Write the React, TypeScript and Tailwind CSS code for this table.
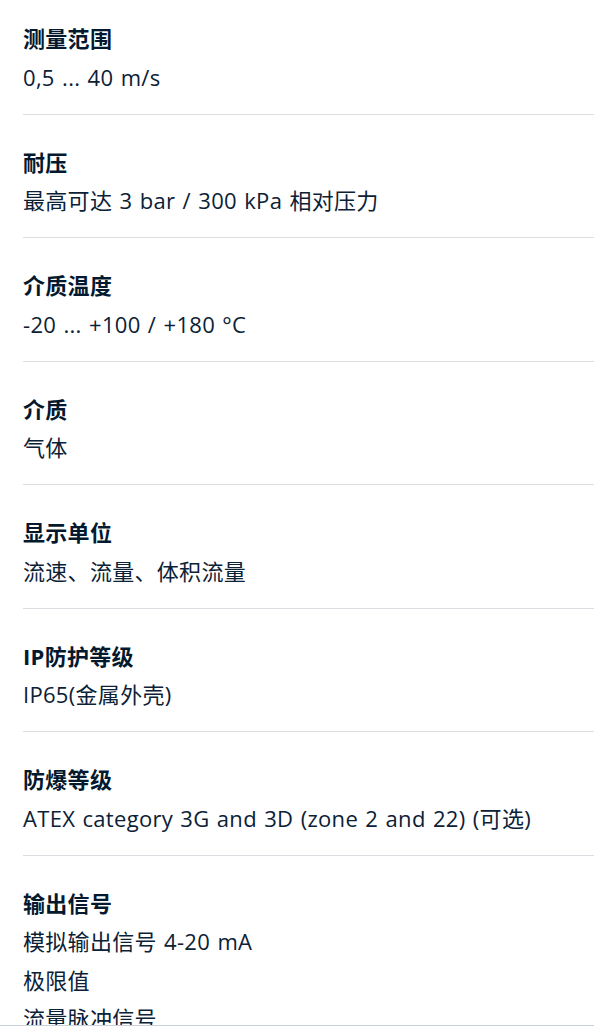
const specs: { label: string; values: string[] }[] = [
  { label: "测量范围", values: ["0,5 ... 40 m/s"] },
  { label: "耐压", values: ["最高可达 3 bar / 300 kPa 相对压力"] },
  { label: "介质温度", values: ["-20 ... +100 / +180 °C"] },
  { label: "介质", values: ["气体"] },
  { label: "显示单位", values: ["流速、流量、体积流量"] },
  { label: "IP防护等级", values: ["IP65(金属外壳)"] },
  { label: "防爆等级", values: ["ATEX category 3G and 3D (zone 2 and 22) (可选)"] },
  { label: "输出信号", values: ["模拟输出信号 4-20 mA", "极限值", "流量脉冲信号"] },
];

export default function App() {
  return (
    <div
      className="min-h-screen bg-white text-[#0b2136] overflow-hidden"
      style={{ fontFamily: '"Open Sans", "Noto Sans CJK SC", sans-serif' }}
    >
      <dl className="ml-[23px]">
        {specs.map((spec, i) => (
          <div
            key={spec.label}
            className={`${i === 0 ? "pt-[19px]" : "pt-[28px]"} pb-[17.5px] ${
              i < specs.length - 1 ? "border-b border-[#dadee3]" : ""
            }`}
          >
            <dt className="text-[22px] leading-[38.5px] font-bold tracking-[0.3px] text-[#04192e]">
              {spec.label}
            </dt>
            {spec.values.map((v) => (
              <dd key={v} className="text-[22px] leading-[38.5px] tracking-[0.3px] [word-spacing:1.3px]">
                {v}
              </dd>
            ))}
          </div>
        ))}
      </dl>

      {/* bottom bar edge */}
      <div className="fixed bottom-0 left-0 right-0 h-[5px] bg-white border-t border-[#c9d1db]" />
    </div>
  );
}
